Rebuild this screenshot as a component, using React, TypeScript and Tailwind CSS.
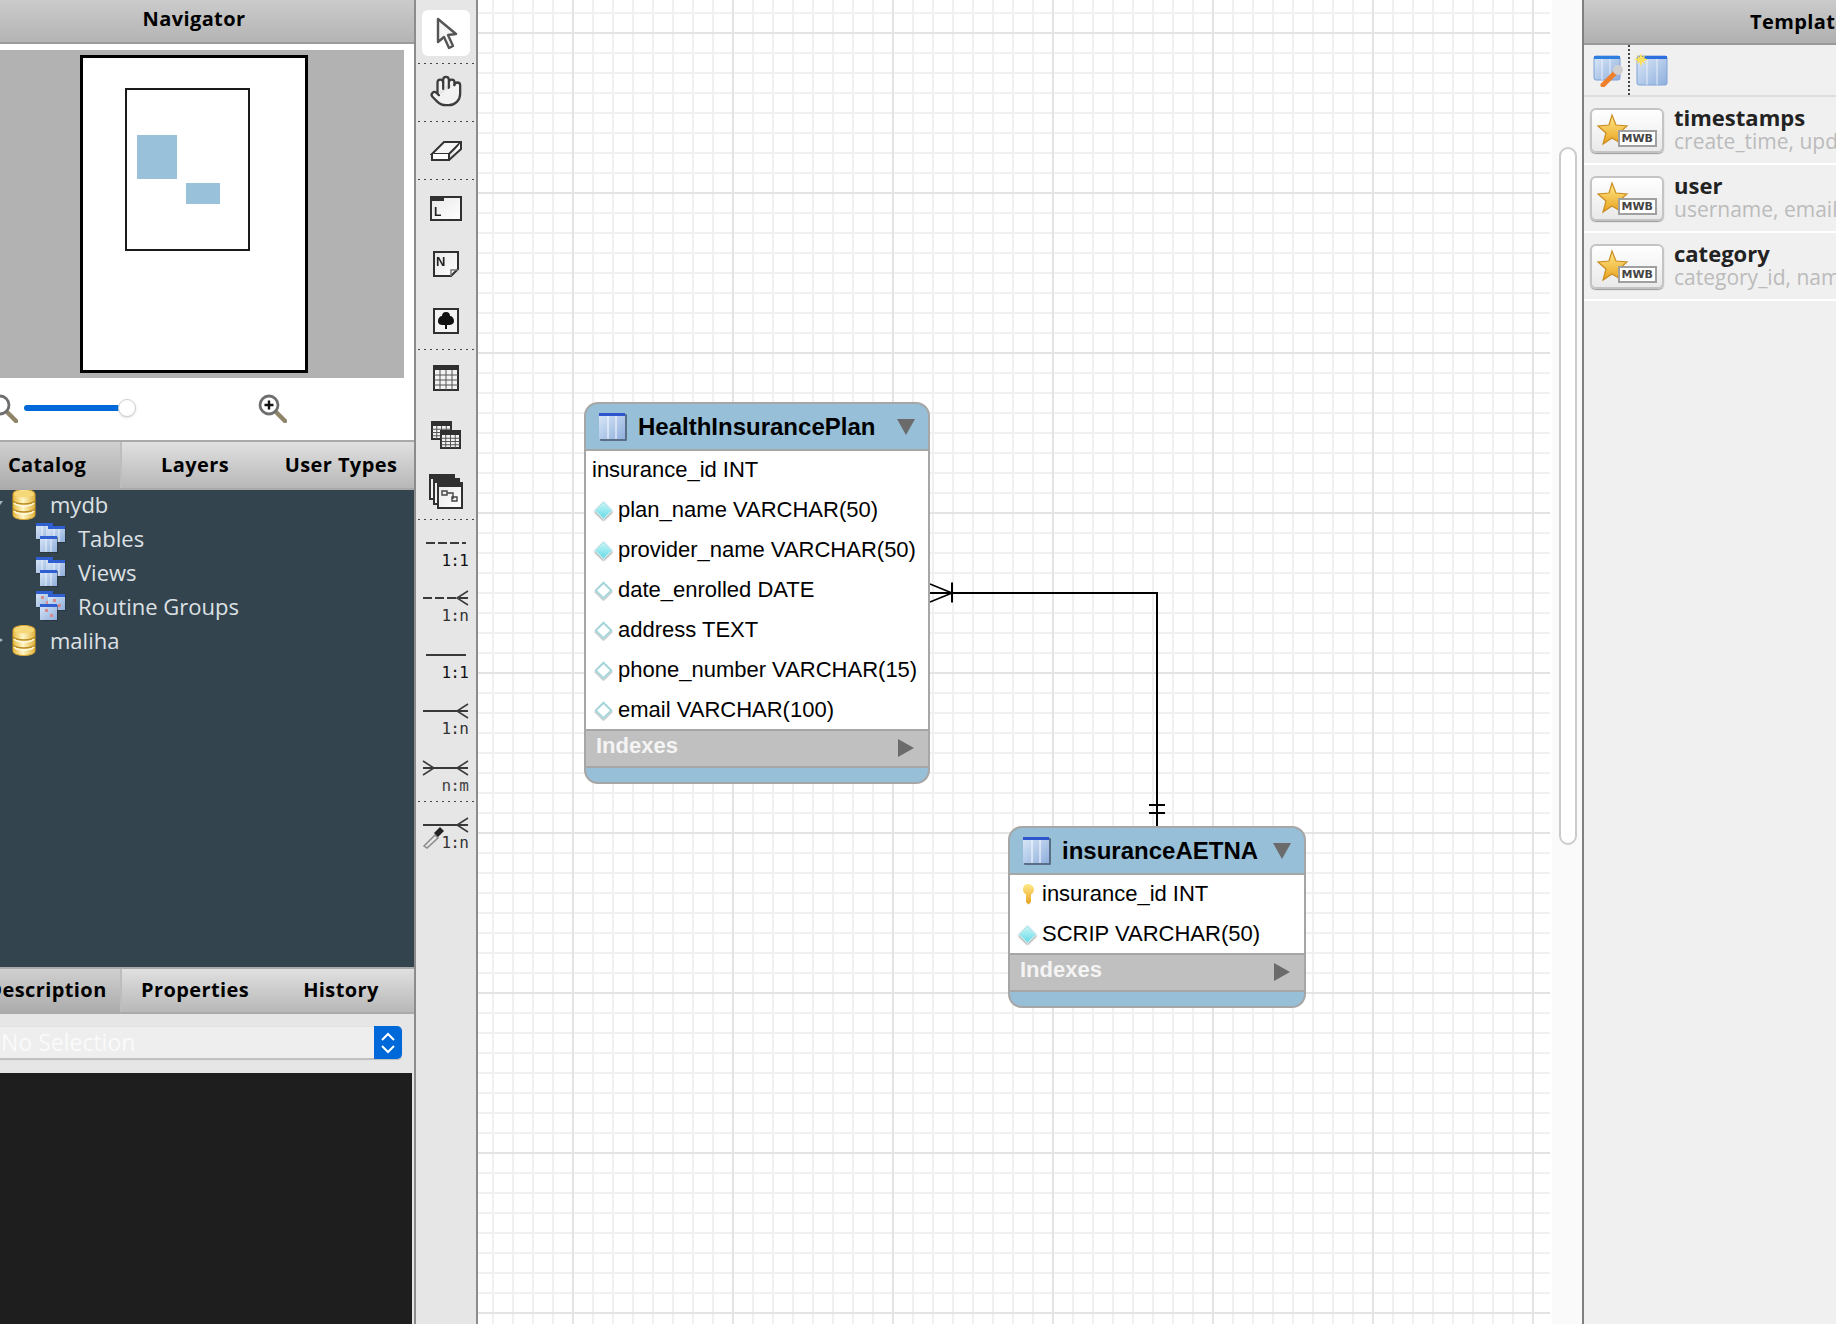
import { Hand } from 'lucide-react'

const tabBase = 'flex-1 flex items-center justify-center pb-px text-[20px] tracking-[0.4px] font-bold text-black'
const activeTab = 'bg-gradient-to-b from-[#d0d0d0] to-[#acacac] border-r-2 border-[#bdbdbd]'

function SharedDefs() {
  return (
    <svg width="0" height="0" className="absolute">
      <defs>
        <linearGradient id="gold" x1="0" y1="0" x2="0" y2="1">
          <stop offset="0" stopColor="#ffe98a" />
          <stop offset="1" stopColor="#e9a21e" />
        </linearGradient>
        <linearGradient id="db" x1="0" y1="0" x2="1" y2="0">
          <stop offset="0" stopColor="#e9b93c" />
          <stop offset="0.45" stopColor="#fff6c8" />
          <stop offset="1" stopColor="#e2b23a" />
        </linearGradient>
        <linearGradient id="tbl" x1="0" y1="0" x2="1" y2="1">
          <stop offset="0" stopColor="#dbe8f8" />
          <stop offset="1" stopColor="#8fafdc" />
        </linearGradient>
        <linearGradient id="paper" x1="0" y1="0" x2="1" y2="1">
          <stop offset="0" stopColor="#e8e8e8" />
          <stop offset="1" stopColor="#ffffff" />
        </linearGradient>
      </defs>
    </svg>
  )
}

function Magnifier({ plus }: { plus?: boolean }) {
  return (
    <svg width="30" height="30" viewBox="0 0 30 30" className="shrink-0 blur-[0.4px]">
      <line x1="18" y1="18" x2="28" y2="28" stroke="#8f8468" strokeWidth="4.5" strokeLinecap="round" />
      <circle cx="12" cy="12" r="9" fill="#fff" stroke="#6e6e6e" strokeWidth="2.8" />
      {plus && <path d="M12 7.500v9M7.500 12h9" stroke="#111" strokeWidth="2.400" />}
    </svg>
  )
}

function DbIcon() {
  return (
    <svg width="24" height="31" viewBox="0 0 24 31" className="shrink-0">
      <path d="M1 5c0-6 22-6 22 0v21c0 6-22 6-22 0z" fill="url(#db)" stroke="#d9a52d" />
      <ellipse cx="12" cy="5" rx="10" ry="3.6" fill="#f6d878" />
      <path d="M1 12c4 4 18 4 22 0M1 20c4 4 18 4 22 0" fill="none" stroke="#b98a20" strokeWidth="1.4" />
      <path d="M2 14c4 4 16 4 20 0M2 22c4 4 16 4 20 0" fill="none" stroke="#fff9dc" strokeWidth="1.6" />
    </svg>
  )
}

function MiniWindow({ x, y, dots }: { x: number; y: number; dots?: boolean }) {
  return (
    <g>
      <rect x={x + 1} y={y + 1} width="17" height="16" fill="#1f2a33" opacity="0.5" />
      <rect x={x} y={y} width="17" height="16" fill="url(#tbl)" />
      <rect x={x} y={y} width="17" height="3" fill="#2f5fd0" />
      {dots ? (
        <path d={`M${x + 5} ${y + 5}h3v3h-3zM${x + 10} ${y + 10}h3v3h-3z`} fill="#d98a8a" />
      ) : (
        <path d={`M${x + 6} ${y + 3}v13M${x + 11} ${y + 3}v13`} stroke="#fff" strokeWidth="1" opacity="0.7" />
      )}
    </g>
  )
}

function GroupIcon({ dots }: { dots?: boolean }) {
  return (
    <svg width="32" height="32" viewBox="0 0 32 32" className="shrink-0">
      <MiniWindow x={1} y={1} dots={dots} />
      <MiniWindow x={13} y={4} dots={dots} />
      <MiniWindow x={5} y={14} dots={dots} />
    </svg>
  )
}

function TreeRow({ label, expanded }: { label: string; expanded?: boolean }) {
  return (
    <div className="flex h-[34px] items-center pl-[18px]">
      <svg width="12" height="12" viewBox="0 0 12 12" className="shrink-0">
        {expanded ? <path d="M1 3h10l-5 7z" fill="#a9b2b8" /> : <path d="M3 1v10l8-5z" fill="#a9b2b8" />}
      </svg>
      <div className="ml-[8px]">
        <DbIcon />
      </div>
      <span className="ml-[14px] text-[22px] text-[#dde1e4]">{label}</span>
    </div>
  )
}

function SubRow({ label, dots }: { label: string; dots?: boolean }) {
  return (
    <div className="flex h-[34px] items-center pl-[61px]">
      <GroupIcon dots={dots} />
      <span className="ml-[11px] text-[22px] text-[#dde1e4]">{label}</span>
    </div>
  )
}

function LeftPanel() {
  return (
    <div className="ml-[-26px] flex h-full w-[442px] shrink-0 flex-col border-r-2 border-[#8c8c8c] bg-[#e6e6e6]">
      <div className="flex h-[44px] shrink-0 items-center justify-center border-b-2 border-[#9c9c9c] bg-gradient-to-b from-[#cbcbcb] to-[#b4b4b4] pb-[4px] text-[20px] font-bold tracking-[0.4px] text-black">
        Navigator
      </div>

      <div className="h-[396px] shrink-0 bg-white px-[10px] pt-[6px]">
        <div className="flex h-[328px] justify-center bg-[#b2b2b2] pt-[5px]">
          <div className="relative h-[318px] w-[228px] border-[3px] border-black bg-white">
            <div className="absolute left-[42px] top-[30px] h-[163px] w-[125px] border-2 border-[#1a1a1a]" />
            <div className="absolute left-[54px] top-[77px] h-[44px] w-[40px] bg-[#9ac1da]" />
            <div className="absolute left-[103px] top-[125px] h-[21px] w-[34px] bg-[#9ac1da]" />
          </div>
        </div>
        <div className="flex h-[62px] items-center pb-[2px] pl-[4px]">
          <Magnifier />
          <div className="relative ml-[6px] h-[6px] w-[112px] rounded-full">
            <div className="h-[6px] w-[96px] rounded-full bg-[#0069d9]" />
            <div className="absolute left-[94px] top-[-6px] h-[18px] w-[18px] rounded-full border border-[#d0d0d0] bg-white shadow-sm" />
          </div>
          <div className="ml-[121px]">
            <Magnifier plus />
          </div>
        </div>
      </div>

      <div className="flex h-[50px] shrink-0 border-y-2 border-[#aaaaaa] bg-gradient-to-b from-[#e0e0e0] to-[#b8b8b8]">
        <div className={`${tabBase} ${activeTab}`}>Catalog</div>
        <div className={tabBase}>Layers</div>
        <div className={tabBase}>User Types</div>
      </div>

      <div className="h-[477px] shrink-0 overflow-hidden bg-[#34444f]">
        <div className="mt-[-3px]">
          <TreeRow label="mydb" expanded />
          <SubRow label="Tables" />
          <SubRow label="Views" />
          <SubRow label="Routine Groups" dots />
          <TreeRow label="maliha" />
        </div>
      </div>

      <div className="flex h-[47px] shrink-0 border-y-2 border-[#aaaaaa] bg-gradient-to-b from-[#e0e0e0] to-[#b8b8b8]">
        <div className={`${tabBase} ${activeTab}`}>Description</div>
        <div className={tabBase}>Properties</div>
        <div className={tabBase}>History</div>
      </div>

      <div className="flex h-[59px] shrink-0 items-start pr-[12px] pt-[13px]">
        <div className="flex h-[33px] flex-1 items-center justify-between rounded-[5px] border-b-2 border-[#c0c0c0] bg-[#eeeeee] pl-[27px] shadow-[0_0_1px_#bbbbbb]">
          <span className="text-[23px] text-[#fafafa]">No Selection</span>
          <div className="flex h-[33px] w-[28px] items-center justify-center rounded-r-[5px] bg-[#0069d9]">
            <svg width="16" height="24" viewBox="0 0 16 24" fill="none" stroke="#fff" strokeWidth="2">
              <path d="M2 9l6-6 6 6M2 15l6 6 6-6" />
            </svg>
          </div>
        </div>
      </div>

      <div className="mr-[2px] flex-1 bg-[#1e1e1e]" />
    </div>
  )
}

function Separator() {
  return <div className="mx-[2px] h-px shrink-0 bg-[repeating-linear-gradient(to_right,#444444_0,#444444_2px,transparent_2px,transparent_6px)]" />
}

function ToolFrame({ h, children }: { h: number; children: React.ReactNode }) {
  return (
    <div style={{ height: h }} className="flex shrink-0 items-center justify-center">
      {children}
    </div>
  )
}

function WindowGlyph({ x, y, w, h, children }: { x: number; y: number; w: number; h: number; children?: React.ReactNode }) {
  return (
    <g>
      <rect x={x} y={y} width={w} height={h} fill="url(#paper)" stroke="#303030" strokeWidth="2" />
      {children}
    </g>
  )
}

function GridGlyph({ x, y, w, h }: { x: number; y: number; w: number; h: number }) {
  const cols = [1, 2, 3].map((i) => x + (w * i) / 4)
  const rows = [1, 2, 3].map((i) => y + 4 + ((h - 4) * i) / 4)
  return (
    <g>
      <rect x={x} y={y} width={w} height={h} fill="#f2f2f2" stroke="#303030" strokeWidth="2" />
      <rect x={x} y={y} width={w} height="4" fill="#303030" />
      {cols.map((c) => (
        <line key={c} x1={c} x2={c} y1={y + 4} y2={y + h} stroke="#555" />
      ))}
      {rows.map((r) => (
        <line key={r} x1={x} x2={x + w} y1={r} y2={r} stroke="#555" />
      ))}
    </g>
  )
}

function ConnTool({ h, lineTop, label, dashed, left, right, dropper, labelClass }: {
  h: number
  lineTop: number
  label: string
  dashed?: boolean
  left?: boolean
  right?: boolean
  dropper?: boolean
  labelClass: string
}) {
  return (
    <div style={{ height: h, paddingTop: lineTop }} className="relative shrink-0">
      <svg width="60" height="18" viewBox="0 0 60 18" className="block blur-[0.3px]" fill="none" stroke="#3a3a3a" strokeWidth="2">
        <path d={`M${left || right ? 7 : 10} 9H${right ? 52 : 50}`} strokeDasharray={dashed ? '9 3' : undefined} />
        {right && <path d="M52 2L41 9l11 7" strokeWidth="1.5" />}
        {left && <path d="M7 2l11 7-11 7" strokeWidth="1.5" />}
      </svg>
      <div className={`pr-[8px] text-right font-['DejaVu_Sans_Mono',monospace] text-[16px] leading-[18px] tracking-[-0.8px] ${labelClass}`}>
        {label}
      </div>
      {dropper && (
        <svg width="24" height="24" viewBox="0 0 24 24" className="absolute left-[5px] top-[23px]">
          <path d="M3 21l11-11 3 3L6 23z" fill="#e6e6e6" stroke="#8a8a8a" strokeWidth="1.5" />
          <path d="M13 8l6-6 4 4-6 6z" fill="#222" />
        </svg>
      )}
    </div>
  )
}

function Toolbar() {
  return (
    <div className="flex h-full w-[62px] shrink-0 flex-col border-r-2 border-[#8c8c8c] bg-[#e6e6e6]">
      <div className="h-[63px] shrink-0 px-[6px] pt-[10px]">
        <div className="flex h-[46px] w-[48px] items-center justify-center rounded-[6px] bg-white">
          <svg width="24" height="34" viewBox="0 0 24 34" className="blur-[0.4px]">
            <path d="M4 3v23l6-5 5 11 4-2-5-11 8-1z" fill="#f4f4f4" stroke="#555" strokeWidth="2.4" strokeLinejoin="round" />
          </svg>
        </div>
      </div>
      <Separator />
      <ToolFrame h={57}>
        <div className="mb-[3px]">
          <Hand size={34} strokeWidth={1.6} color="#3c3c3c" fill="#f2f2f2" className="blur-[0.3px]" />
        </div>
      </ToolFrame>
      <Separator />
      <ToolFrame h={57}>
        <svg width="32" height="24" viewBox="0 0 32 24" className="blur-[0.3px]" fill="none" stroke="#333" strokeWidth="2">
          <path d="M2 15L14 3h17L19 15z" fill="#f6f6f6" />
          <path d="M2 15v6h17v-6M19 21l12-11V3" fill="#fff" />
        </svg>
      </ToolFrame>
      <Separator />
      <ToolFrame h={56}>
        <svg width="32" height="26" viewBox="0 0 32 26" className="blur-[0.3px]">
          <WindowGlyph x={1} y={2} w={30} h={23}>
            <rect x={1} y={2} width={13} height={4} fill="#303030" />
            <text x="4" y="21" fontSize="12" fontWeight="700" fontFamily="Liberation Sans, sans-serif" fill="#222">L</text>
          </WindowGlyph>
        </svg>
      </ToolFrame>
      <ToolFrame h={56}>
        <svg width="26" height="26" viewBox="0 0 26 26" className="blur-[0.3px]">
          <path d="M1 1h24v17l-7 7H1z" fill="url(#paper)" stroke="#303030" strokeWidth="2" />
          <path d="M18 25v-6h7" fill="none" stroke="#777" strokeWidth="1.5" />
          <text x="3" y="15" fontSize="13" fontWeight="700" fontFamily="Liberation Sans, sans-serif" fill="#222">N</text>
        </svg>
      </ToolFrame>
      <ToolFrame h={57}>
        <svg width="26" height="26" viewBox="0 0 26 26" className="blur-[0.3px]">
          <rect x="1" y="1" width="24" height="24" fill="#f4f4f4" stroke="#303030" strokeWidth="2" />
          <path d="M13 4c3 0 4 2 4 4 2 0 4 2 4 5s-3 4-5 4h-2v4h-2v-4h-2c-3 0-5-1-5-4s2-5 4-5c0-2 1-4 4-4z" fill="#111" />
        </svg>
      </ToolFrame>
      <Separator />
      <ToolFrame h={56}>
        <svg width="26" height="26" viewBox="0 0 26 26" className="blur-[0.3px]">
          <GridGlyph x={1} y={1} w={24} h={24} />
        </svg>
      </ToolFrame>
      <ToolFrame h={58}>
        <svg width="30" height="28" viewBox="0 0 30 28" className="blur-[0.3px]">
          <GridGlyph x={1} y={1} w={19} h={17} />
          <GridGlyph x={10} y={10} w={19} h={17} />
        </svg>
      </ToolFrame>
      <ToolFrame h={55}>
        <svg width="36" height="36" viewBox="0 0 36 36" className="mb-[2px] blur-[0.3px]">
          <WindowGlyph x={2} y={2} w={24} h={24}>
            <rect x={2} y={2} width={24} height={4} fill="#303030" />
          </WindowGlyph>
          <WindowGlyph x={6} y={6} w={25} h={25}>
            <rect x={6} y={6} width={25} height={4} fill="#303030" />
          </WindowGlyph>
          <WindowGlyph x={10} y={10} w={24} h={25}>
            <rect x={10} y={10} width={24} height={4} fill="#303030" />
            <path d="M14 18h5v4h-5zM24 24h5v4h-5zM19 20h6v6" fill="none" stroke="#444" strokeWidth="1.4" />
          </WindowGlyph>
        </svg>
      </ToolFrame>
      <Separator />
      <ConnTool h={57} lineTop={14} label="1:1" dashed labelClass="text-[#111]" />
      <ConnTool h={56} lineTop={12} label="1:n" dashed right labelClass="text-[#333]" />
      <ConnTool h={57} lineTop={13} label="1:1" labelClass="text-[#111]" />
      <ConnTool h={57} lineTop={12} label="1:n" right labelClass="text-[#333]" />
      <ConnTool h={54} lineTop={12} label="n:m" left right labelClass="text-[#444]" />
      <Separator />
      <ConnTool h={58} lineTop={14} label="1:n" right dropper labelClass="text-[#333]" />
    </div>
  )
}

function TableGlyph() {
  return (
    <svg width="30" height="30" viewBox="0 0 30 30" className="shrink-0">
      <rect x="2" y="2" width="27" height="27" rx="1" fill="#46536b" opacity="0.75" />
      <rect x="1" y="1" width="26" height="26" fill="url(#tbl)" />
      <rect x="1" y="1" width="26" height="3" fill="#2e55cc" />
      <path d="M10 4v23M18 4v23" stroke="#fff" strokeWidth="1.5" opacity="0.65" />
    </svg>
  )
}

function Diamond({ filled }: { filled?: boolean }) {
  return (
    <div
      className={
        filled
          ? 'h-[13px] w-[13px] rotate-45 border border-[#a8dfe2] bg-gradient-to-br from-[#c4f5f8] to-[#62dbe6] shadow-[1px_1px_2px_#999999]'
          : 'h-[13px] w-[13px] rotate-45 border-2 border-[#a6d6da] bg-white shadow-[1px_1px_1px_#bbbbbb]'
      }
    />
  )
}

function KeyGlyph() {
  return (
    <svg width="14" height="22" viewBox="0 0 14 22">
      <path d="M7 1c3.500 0 6 2.500 6 5.500 0 2.200-1.200 4-3 5V19l-2.500 2.500L5 19v-7.500c-1.800-1-3-2.800-3-5C2 3.500 3.500 1 7 1z" fill="url(#gold)" />
    </svg>
  )
}

type Column = { name: string; kind: 'none' | 'filled' | 'empty' | 'key' }

function EntityTable({ title, columns, left, top, width, bodyHeight }: {
  title: string
  columns: Column[]
  left: number
  top: number
  width: number
  bodyHeight: number
}) {
  return (
    <div
      style={{ left, top, width }}
      className="absolute flex flex-col overflow-hidden rounded-[14px] border-2 border-[#a6a6a6] bg-[#97bfd8] font-['Liberation_Sans',Arial,sans-serif]"
    >
      <div className="flex h-[47px] shrink-0 items-center border-b-2 border-[#a6a6a6] pl-[12px] pr-[13px]">
        <TableGlyph />
        <span className="ml-[10px] flex-1 whitespace-nowrap text-[24px] font-bold leading-none text-black">{title}</span>
        <svg width="18" height="16" viewBox="0 0 18 16"><path d="M0 0h18L9 16z" fill="#6b6b6b" /></svg>
      </div>
      <div style={{ height: bodyHeight }} className="overflow-hidden bg-white">
        <div className="mt-[-1px]">
          {columns.map((c) => (
            <div key={c.name} className="flex h-[40px] items-center whitespace-nowrap text-[22px] leading-none text-black">
              {c.kind === 'none' ? (
                <span className="pl-[6px]">{c.name}</span>
              ) : (
                <>
                  <div className="flex w-[32px] shrink-0 justify-center pl-[3px]">
                    {c.kind === 'key' ? <KeyGlyph /> : <Diamond filled={c.kind === 'filled'} />}
                  </div>
                  <span>{c.name}</span>
                </>
              )}
            </div>
          ))}
        </div>
      </div>
      <div className="flex h-[39px] shrink-0 items-center justify-between border-y-2 border-[#a6a6a6] bg-[#c0c0c0] pl-[10px] pr-[14px]">
        <span className="mb-[5px] text-[22px] font-bold leading-none text-[#f4f4f4]">Indexes</span>
        <svg width="16" height="18" viewBox="0 0 16 18" className="mb-[1px]"><path d="M0 0l16 9-16 9z" fill="#6b6b6b" /></svg>
      </div>
      <div className="h-[14px] shrink-0" />
    </div>
  )
}

function Canvas() {
  return (
    <div className="relative h-full w-[1074px] shrink-0 overflow-hidden bg-white">
      <div className="absolute inset-y-0 left-0 w-[1072px] [background-image:linear-gradient(to_right,#e4e4e4_2px,transparent_2px),linear-gradient(to_bottom,#e4e4e4_2px,transparent_2px),linear-gradient(to_right,#f0f0f0_2px,transparent_2px),linear-gradient(to_bottom,#f0f0f0_2px,transparent_2px)] [background-size:160px_160px,160px_160px,20px_20px,20px_20px] [background-position:94px_0,0_32px,14px_0,0_12px]" />
      <svg width="1074" height="1324" viewBox="0 0 1074 1324" className="absolute inset-0" fill="none" stroke="#000">
        <path d="M452 593H679V826" strokeWidth="2" />
        <path d="M452 584l22 9-22 9" strokeWidth="1.600" />
        <path d="M474 582.500v20" strokeWidth="2" />
        <path d="M671 805h16M671 813h16" strokeWidth="2" />
      </svg>
      <EntityTable
        title="HealthInsurancePlan"
        left={106}
        top={402}
        width={346}
        bodyHeight={278}
        columns={[
          { name: 'insurance_id INT', kind: 'none' },
          { name: 'plan_name VARCHAR(50)', kind: 'filled' },
          { name: 'provider_name VARCHAR(50)', kind: 'filled' },
          { name: 'date_enrolled DATE', kind: 'empty' },
          { name: 'address TEXT', kind: 'empty' },
          { name: 'phone_number VARCHAR(15)', kind: 'empty' },
          { name: 'email VARCHAR(100)', kind: 'empty' },
        ]}
      />
      <EntityTable
        title="insuranceAETNA"
        left={530}
        top={826}
        width={298}
        bodyHeight={78}
        columns={[
          { name: 'insurance_id INT', kind: 'key' },
          { name: 'SCRIP VARCHAR(50)', kind: 'filled' },
        ]}
      />
    </div>
  )
}

function Scroller() {
  return (
    <div className="h-full w-[30px] shrink-0 bg-[#fafafa] pl-[7px] pt-[147px]">
      <div className="h-[698px] w-[18px] rounded-full border-2 border-[#cbcbcb] bg-white" />
    </div>
  )
}

function TemplateRow({ name, detail }: { name: string; detail: string }) {
  return (
    <div className="flex h-[68px] items-center border-b-2 border-white pl-[6px]">
      <div className="relative h-[45px] w-[74px] shrink-0 rounded-[6px] border-2 border-[#c4c4c4] bg-gradient-to-b from-white to-[#e9e9e9] shadow-[0_1px_1px_#999999]">
        <svg width="34" height="34" viewBox="0 0 34 34" className="absolute left-[5px] top-[3px]">
          <path d="M15 2l4 10 11 1-8 7 3 11-10-6-9 6 3-11-8-7 11-1z" fill="url(#gold)" stroke="#c98d22" strokeWidth="1.2" />
        </svg>
        <div className="absolute bottom-[4px] right-[5px] border-2 border-[#a0a0a0] bg-white px-[2px] font-['DejaVu_Sans',sans-serif] text-[11px] font-bold leading-[13px] text-[#444444]">
          MWB
        </div>
      </div>
      <div className="ml-[10px] min-w-0 whitespace-nowrap pb-[1px]">
        <div className="text-[22px] font-bold leading-[23px] text-[#222222]">{name}</div>
        <div className="text-[21px] leading-[24px] text-[#bbbbbb]">{detail}</div>
      </div>
    </div>
  )
}

function RightPanel() {
  return (
    <div className="h-full min-w-0 flex-1 overflow-hidden border-l-2 border-[#808080] bg-[#f0f0f0]">
      <div className="flex h-[45px] items-center whitespace-nowrap border-b-2 border-[#9a9a9a] bg-gradient-to-b from-[#cbcbcb] to-[#b0b0b0] pl-[166px] text-[20px] font-bold tracking-[0.4px] text-black">
        Templates
      </div>
      <div className="flex h-[52px] items-center border-b-2 border-[#dddddd] pl-[9px]">
        <svg width="32" height="34" viewBox="0 0 32 34" className="shrink-0">
          <rect x="1" y="3" width="26" height="24" rx="2" fill="url(#tbl)" stroke="#7ea2d8" />
          <rect x="1" y="3" width="26" height="3" fill="#2e7fe0" />
          <path d="M9 6v21M17 6v21" stroke="#fff" opacity="0.7" />
          <path d="M10 32l12-12" stroke="#ef7f2a" strokeWidth="5" strokeLinecap="round" />
          <circle cx="25" cy="17" r="5" fill="#d0d0d0" />
        </svg>
        <div className="ml-[3px] h-[50px] border-l-2 border-dotted border-[#444444]" />
        <svg width="34" height="34" viewBox="0 0 34 34" className="ml-[4px] shrink-0">
          <rect x="3" y="3" width="30" height="29" rx="2" fill="url(#tbl)" stroke="#7ea2d8" />
          <rect x="3" y="3" width="30" height="3" fill="#2e6fe0" />
          <path d="M13 6v26M23 6v26" stroke="#fff" opacity="0.7" />
          <path d="M7 0l1.500 4L12 1.500 10 5l4 1.500-4 1.500 2 3.500L8.500 9 7 14 5.500 9 2 11.500 4 8 0 6.500 4 5 2 1.500 5.500 4z" fill="#f7df62" />
        </svg>
      </div>
      <TemplateRow name="timestamps" detail="create_time, update_time" />
      <TemplateRow name="user" detail="username, email, password" />
      <TemplateRow name="category" detail="category_id, name" />
    </div>
  )
}

export default function App() {
  return (
    <div className="flex h-[1324px] w-[1836px] overflow-hidden bg-white font-['Open_Sans',sans-serif]">
      <SharedDefs />
      <LeftPanel />
      <Toolbar />
      <Canvas />
      <Scroller />
      <RightPanel />
    </div>
  )
}
